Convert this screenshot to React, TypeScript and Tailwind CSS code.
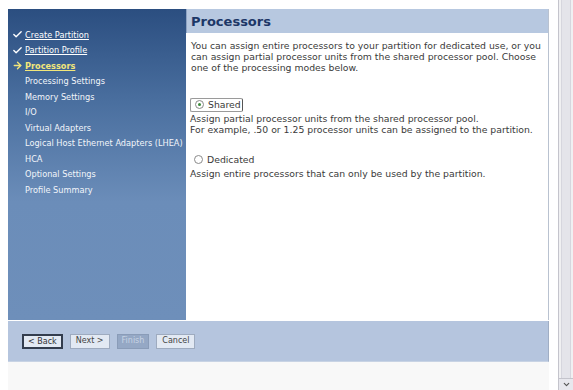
import { Check, ArrowRight, ChevronDown } from 'lucide-react'

const STEPS = [
  { label: 'Create Partition', state: 'done' },
  { label: 'Partition Profile', state: 'done' },
  { label: 'Processors', state: 'current' },
  { label: 'Processing Settings', state: 'todo' },
  { label: 'Memory Settings', state: 'todo' },
  { label: 'I/O', state: 'todo' },
  { label: 'Virtual Adapters', state: 'todo' },
  { label: 'Logical Host Ethernet Adapters (LHEA)', state: 'todo' },
  { label: 'HCA', state: 'todo' },
  { label: 'Optional Settings', state: 'todo' },
  { label: 'Profile Summary', state: 'todo' },
]

function Radio({ on }: { on: boolean }) {
  return (
    <span className="w-[9px] h-[9px] rounded-full border border-[#8a8a8a] bg-white flex items-center justify-center">
      {on && <span className="w-[3px] h-[3px] rounded-full bg-[#3a8a3a]" />}
    </span>
  )
}

export default function App() {
  return (
    <div
      className="w-[573px] h-[390px] flex bg-[#f7f7f7] overflow-hidden text-[#3a3a3a]"
      style={{ fontFamily: '"DejaVu Sans", Verdana, sans-serif' }}
    >
      <div className="flex-1 flex flex-col pt-[9px] pl-[8px] pr-[9px] bg-white">
        <div className="flex h-[311px]">
          {/* Sidebar */}
          <div className="w-[178px] shrink-0 bg-[linear-gradient(180deg,#2b4e80_0%,#4a6f9f_30%,#6b8db9_62%,#6e8fba_100%)] pt-[18px]">
            {STEPS.map((s) => (
              <div key={s.label} className="h-[15.5px] flex items-center text-[8.2px] whitespace-nowrap">
                <span className="w-[17px] shrink-0 pl-[4px] flex items-center">
                  {s.state === 'done' && <Check size={11} strokeWidth={3} className="text-white" />}
                  {s.state === 'current' && <ArrowRight size={11} strokeWidth={3} className="text-[#f2e67a]" />}
                </span>
                <span
                  className={
                    s.state === 'done'
                      ? 'text-white underline'
                      : s.state === 'current'
                        ? 'text-[#f2e67a] underline font-bold'
                        : 'text-[#f2f5fa]'
                  }
                >
                  {s.label}
                </span>
              </div>
            ))}
          </div>

          {/* Content */}
          <div className="flex-1 flex flex-col bg-white border-r border-[#b9c2d0]">
            <div className="h-[24px] bg-[#b7c8e0] flex items-center pl-[4px] border-l border-[#8ea3c3]">
              <h1 className="text-[13px] font-bold text-[#1c3767] leading-none">Processors</h1>
            </div>
            <div className="pl-[4px] pr-[3px] pt-[7px] text-[9.3px] leading-[11px]">
              <p className="pl-[1px]">
                You can assign entire processors to your partition for dedicated use, or you can assign partial
                processor units from the shared processor pool. Choose one of the processing modes below.
              </p>

              <div className="mt-[24px]">
                <div className="inline-flex items-center gap-[4px] h-[14px] pl-[4px] pr-[1px] border border-[#9a9a9a] border-r-[#555] rounded-[2px] text-[9.3px]">
                  <Radio on />
                  <span>Shared</span>
                </div>
                <p className="mt-[1px]">Assign partial processor units from the shared processor pool.</p>
                <p>For example, .50 or 1.25 processor units can be assigned to the partition.</p>
              </div>

              <div className="mt-[18px]">
                <div className="flex items-center gap-[4px] h-[14px] pl-[4px] text-[9.3px]">
                  <Radio on={false} />
                  <span>Dedicated</span>
                </div>
                <p className="mt-[1px]">Assign entire processors that can only be used by the partition.</p>
              </div>
            </div>
          </div>
        </div>

        {/* Button bar */}
        <div className="mt-[1px] h-[41px] bg-[#b5c5de] border-r border-[#a0aec4] border-b border-b-[#c8d3e4] flex items-center gap-[7px] pl-[14px] text-[8px]">
          <button className="h-[15px] px-[4px] bg-[#e2e9f3] border-2 border-[#333d4e] text-[#333]">&lt; Back</button>
          <button className="h-[15px] px-[5px] bg-[#e2e9f3] border border-[#9eabbf] text-[#444]">Next &gt;</button>
          <button className="h-[15px] px-[4px] bg-[#95a8c5] border border-[#8a9cb8] text-[#c8d3e4]">Finish</button>
          <button className="h-[15px] px-[5px] bg-[#e2e9f3] border border-[#9eabbf] text-[#444]">Cancel</button>
        </div>
        <div className="flex-1 bg-[#f8f8f8]" />
      </div>

      {/* Scrollbar */}
      <div className="w-[15px] flex flex-col bg-[#f0f0f2] border-l border-[#c4c4cc]">
        <div className="flex-1 mx-[2px] bg-[#e4e4ea] border-x border-[#d6d6de]" />
        <div className="h-[12px] flex items-center justify-center bg-[#e8e8ee] border-t border-[#c4c4cc]">
          <ChevronDown size={9} strokeWidth={3} className="text-[#555]" />
        </div>
      </div>
    </div>
  )
}
